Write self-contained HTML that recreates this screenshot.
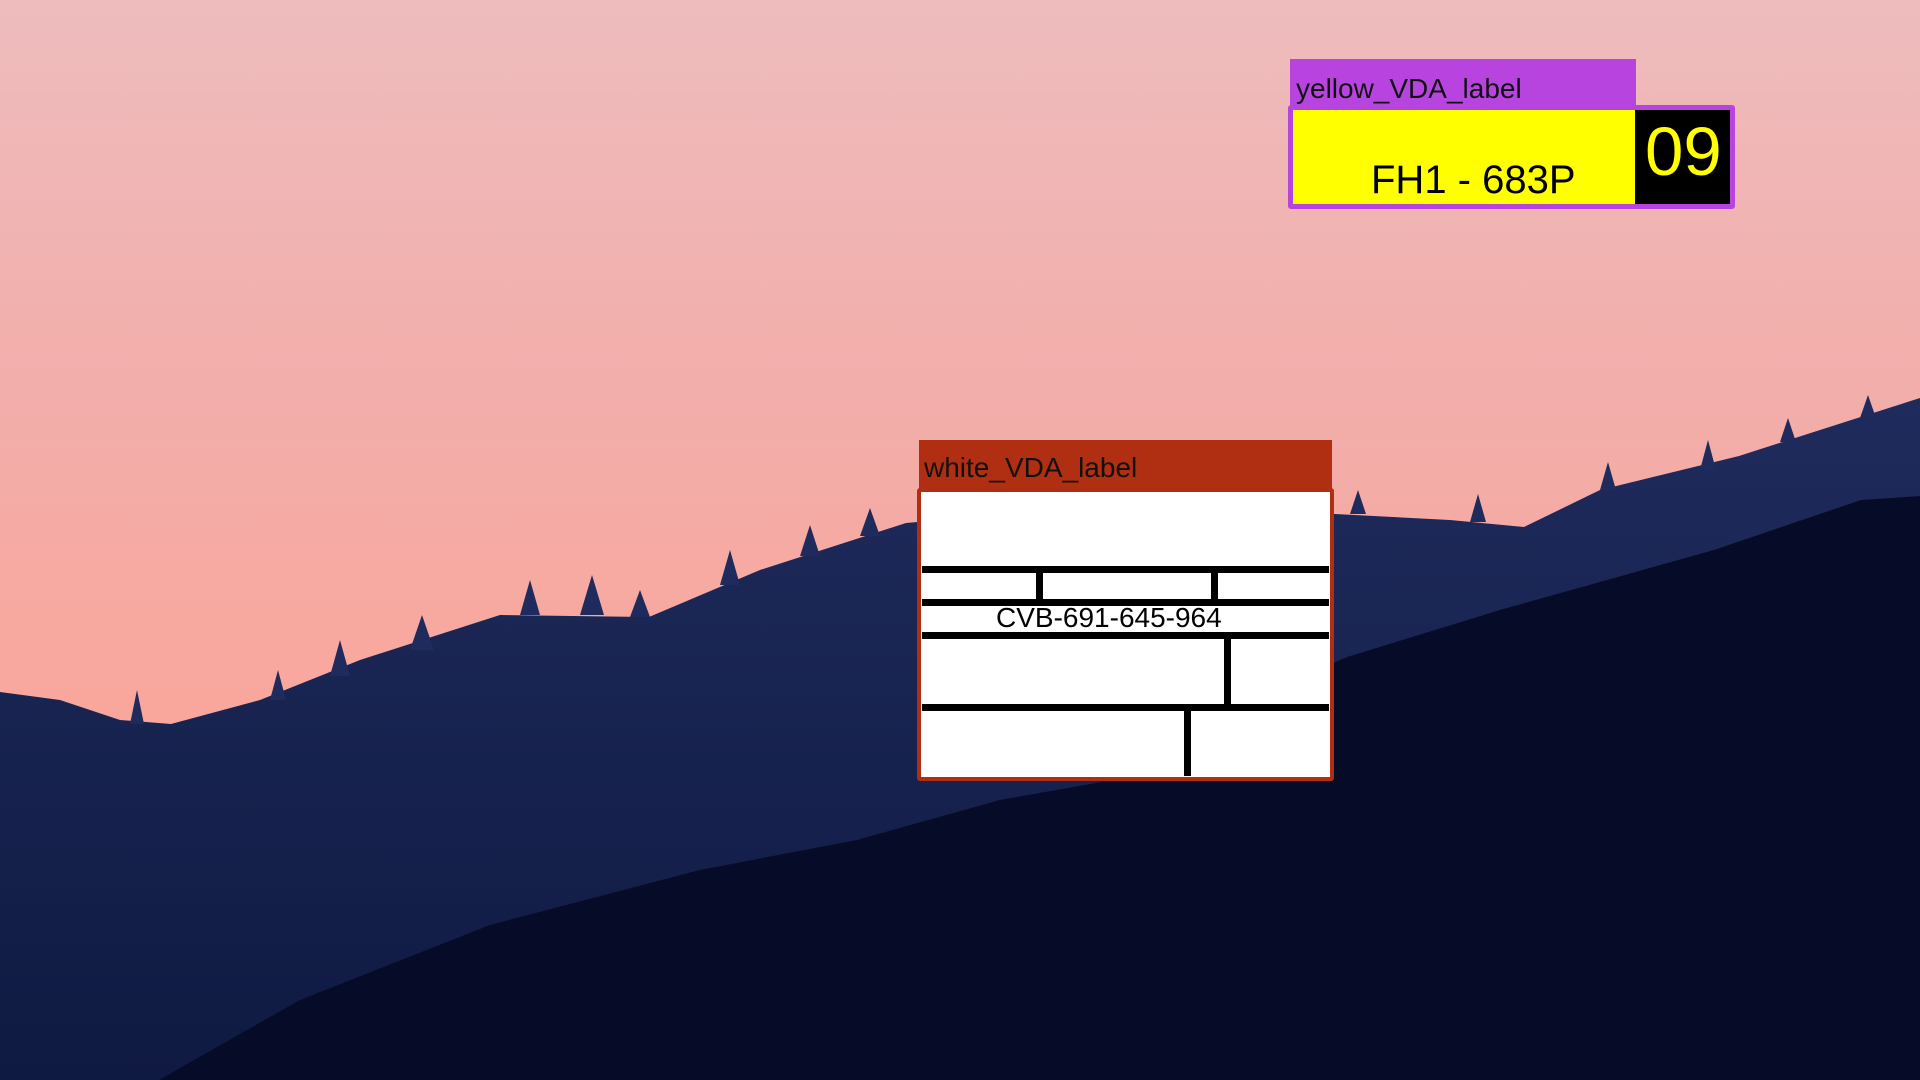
<!DOCTYPE html>
<html><head><meta charset="utf-8"><style>
html,body{margin:0;padding:0;width:1920px;height:1080px;overflow:hidden;font-family:"Liberation Sans",Arial,sans-serif}
.bg{position:absolute;left:0;top:0}
.abs{position:absolute;box-sizing:border-box;white-space:nowrap}
</style></head><body>
<svg class="bg" width="1920" height="1080" viewBox="0 0 1920 1080">
<defs>
<linearGradient id="sky" x1="0" y1="0" x2="0" y2="1">
<stop offset="0" stop-color="#eebcbd"/><stop offset="0.35" stop-color="#f2aeab"/><stop offset="0.7" stop-color="#faa69a"/><stop offset="1" stop-color="#f59a8e"/></linearGradient>
<linearGradient id="back" x1="0" y1="0" x2="0" y2="1">
<stop offset="0" stop-color="#1f2b5c"/><stop offset="1" stop-color="#0f1a42"/></linearGradient>
</defs>
<rect width="1920" height="1080" fill="url(#sky)"/>
<path d="M0 692 L60 700 L120 720 L171 724 L260 700 L360 660 L500 615 L649 617 L760 570 L906 523 L1000 515 L1335 514 L1450 520 L1524 527 L1600 490 L1739 456 L1820 430 L1920 398 L1920 1080 L0 1080Z" fill="url(#back)"/>
<g fill="#1f2b5c">
<path d="M130 724 L137 690 L144 724Z M270 700 L278 670 L286 700Z M330 676 L340 640 L350 676Z M410 650 L422 615 L434 650Z M520 615 L530 580 L540 615Z M580 615 L592 575 L604 615Z M630 617 L640 590 L650 617Z M720 585 L730 550 L740 585Z M800 556 L810 525 L820 556Z M860 536 L870 508 L880 536Z M1350 514 L1358 490 L1366 514Z M1470 522 L1478 494 L1486 522Z M1600 490 L1608 462 L1616 490Z M1700 470 L1708 440 L1716 470Z M1780 442 L1788 418 L1796 442Z M1860 418 L1868 395 L1876 418Z"/>
</g>
<path d="M159 1080 L300 1000 L490 925 L700 870 L857 840 L1000 800 L1102 782 L1250 700 L1347 657 L1500 610 L1714 550 L1861 500 L1920 496 L1920 1080Z" fill="#060c27"/>
</svg>

<div class="abs" style="left:919px;top:440px;width:413px;height:52px;background:#b02e12"></div>
<div class="abs" style="left:924px;top:452px;font-size:28px;color:#111;line-height:32px">white_VDA_label</div>
<div class="abs" style="left:917px;top:488px;width:417px;height:293px;border:4px solid #b02e12;border-radius:3px;background:#fff"></div>
<div class="abs" style="left:922px;top:566px;width:407px;height:7px;background:#000"></div>
<div class="abs" style="left:922px;top:599px;width:407px;height:7px;background:#000"></div>
<div class="abs" style="left:922px;top:632px;width:407px;height:7px;background:#000"></div>
<div class="abs" style="left:922px;top:704px;width:407px;height:7px;background:#000"></div>
<div class="abs" style="left:1036px;top:573px;width:7px;height:26px;background:#000"></div>
<div class="abs" style="left:1211px;top:573px;width:7px;height:26px;background:#000"></div>
<div class="abs" style="left:1224px;top:639px;width:7px;height:65px;background:#000"></div>
<div class="abs" style="left:1184px;top:711px;width:7px;height:65px;background:#000"></div>
<div class="abs" style="left:996px;top:603px;font-size:28px;color:#000;line-height:30px">CVB-691-645-964</div>

<div class="abs" style="left:1290px;top:59px;width:346px;height:50px;background:#b844e0"></div>
<div class="abs" style="left:1296px;top:73px;font-size:28px;color:#111;line-height:32px">yellow_VDA_label</div>
<div class="abs" style="left:1288px;top:105px;width:447px;height:104px;border:5px solid #b844e0;border-radius:3px;background:#ffff00"></div>
<div class="abs" style="left:1635px;top:110px;width:95px;height:94px;background:#000"></div>
<div class="abs" style="left:1371px;top:157px;font-size:40px;color:#000;line-height:46px">FH1 - 683P</div>
<div class="abs" style="left:1645px;top:113px;font-size:69px;color:#ffff00;line-height:78px">09</div>
</body></html>
